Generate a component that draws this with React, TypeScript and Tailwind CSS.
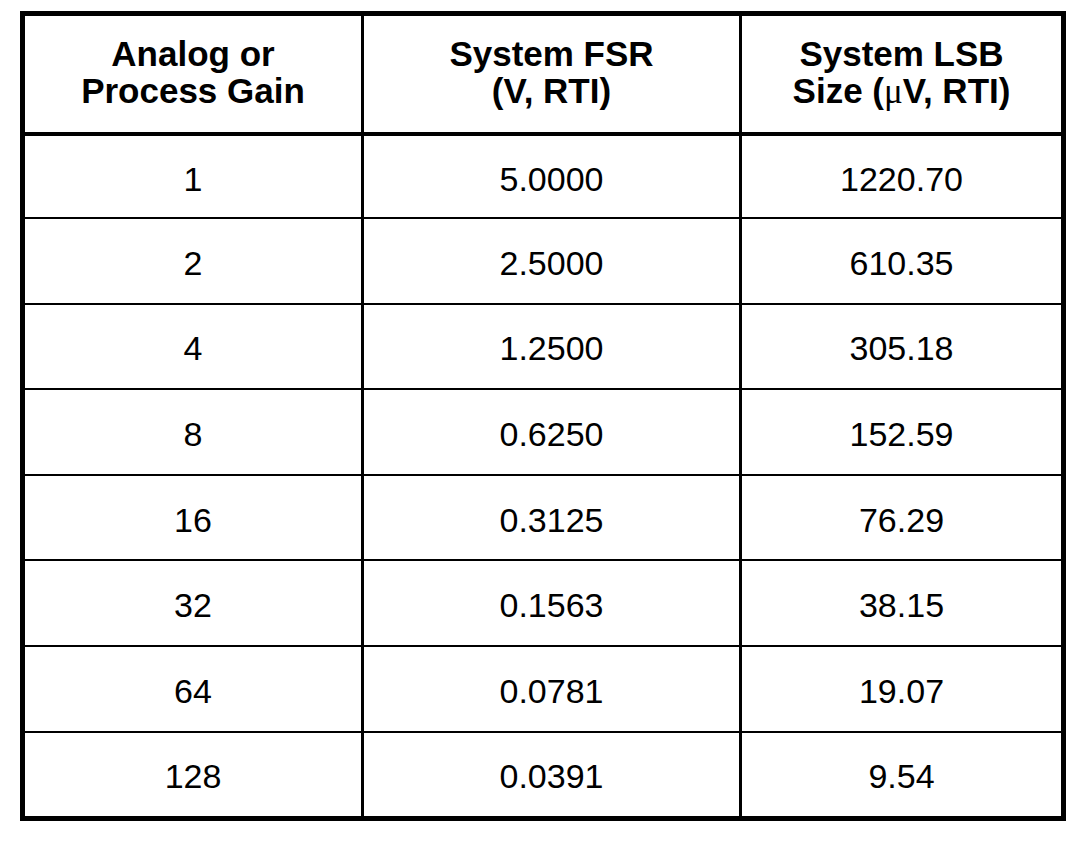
const ROWS: [string, string, string][] = [
  ['1', '5.0000', '1220.70'],
  ['2', '2.5000', '610.35'],
  ['4', '1.2500', '305.18'],
  ['8', '0.6250', '152.59'],
  ['16', '0.3125', '76.29'],
  ['32', '0.1563', '38.15'],
  ['64', '0.0781', '19.07'],
  ['128', '0.0391', '9.54'],
]

const COLS = 'grid grid-cols-[336px_3px_375px_3px_319px]'

function Sep() {
  return <div className="bg-black" />
}

export default function App() {
  return (
    <div className="w-[1086px] h-[841px] bg-white text-black font-['Liberation_Sans',Arial,sans-serif]">
      <div className="pt-[11px] pl-[20px]">
        <div className="w-[1046px] border-[5px] border-black">
          {/* ── Header ── */}
          <div className={`${COLS} h-[120px] border-b-4 border-black`}>
            <div className="flex items-center justify-center pb-1 text-center text-[35px] font-bold leading-[37px]">
              Analog or<br />Process Gain
            </div>
            <Sep />
            <div className="flex items-center justify-center pb-1 text-center text-[35px] font-bold leading-[37px]">
              System FSR<br />(V, RTI)
            </div>
            <Sep />
            <div className="flex items-center justify-center pb-1 text-center text-[35px] font-bold leading-[37px]">
              <span>
                System LSB<br />Size (<span className="font-['Liberation_Serif',serif] font-normal">μ</span>V, RTI)
              </span>
            </div>
          </div>

          {/* ── Body rows ── */}
          {ROWS.map((r, i) => (
            <div
              key={r[0]}
              className={`${COLS} ${i === 0 ? 'h-[81px]' : 'h-[85.6px] border-t-2 border-black'}`}
            >
              <div className="flex items-center justify-center pt-[5px] text-[34px]">{r[0]}</div>
              <Sep />
              <div className="flex items-center justify-center pt-[5px] text-[34px]">{r[1]}</div>
              <Sep />
              <div className="flex items-center justify-center pt-[5px] text-[34px]">{r[2]}</div>
            </div>
          ))}
        </div>
      </div>
    </div>
  )
}
